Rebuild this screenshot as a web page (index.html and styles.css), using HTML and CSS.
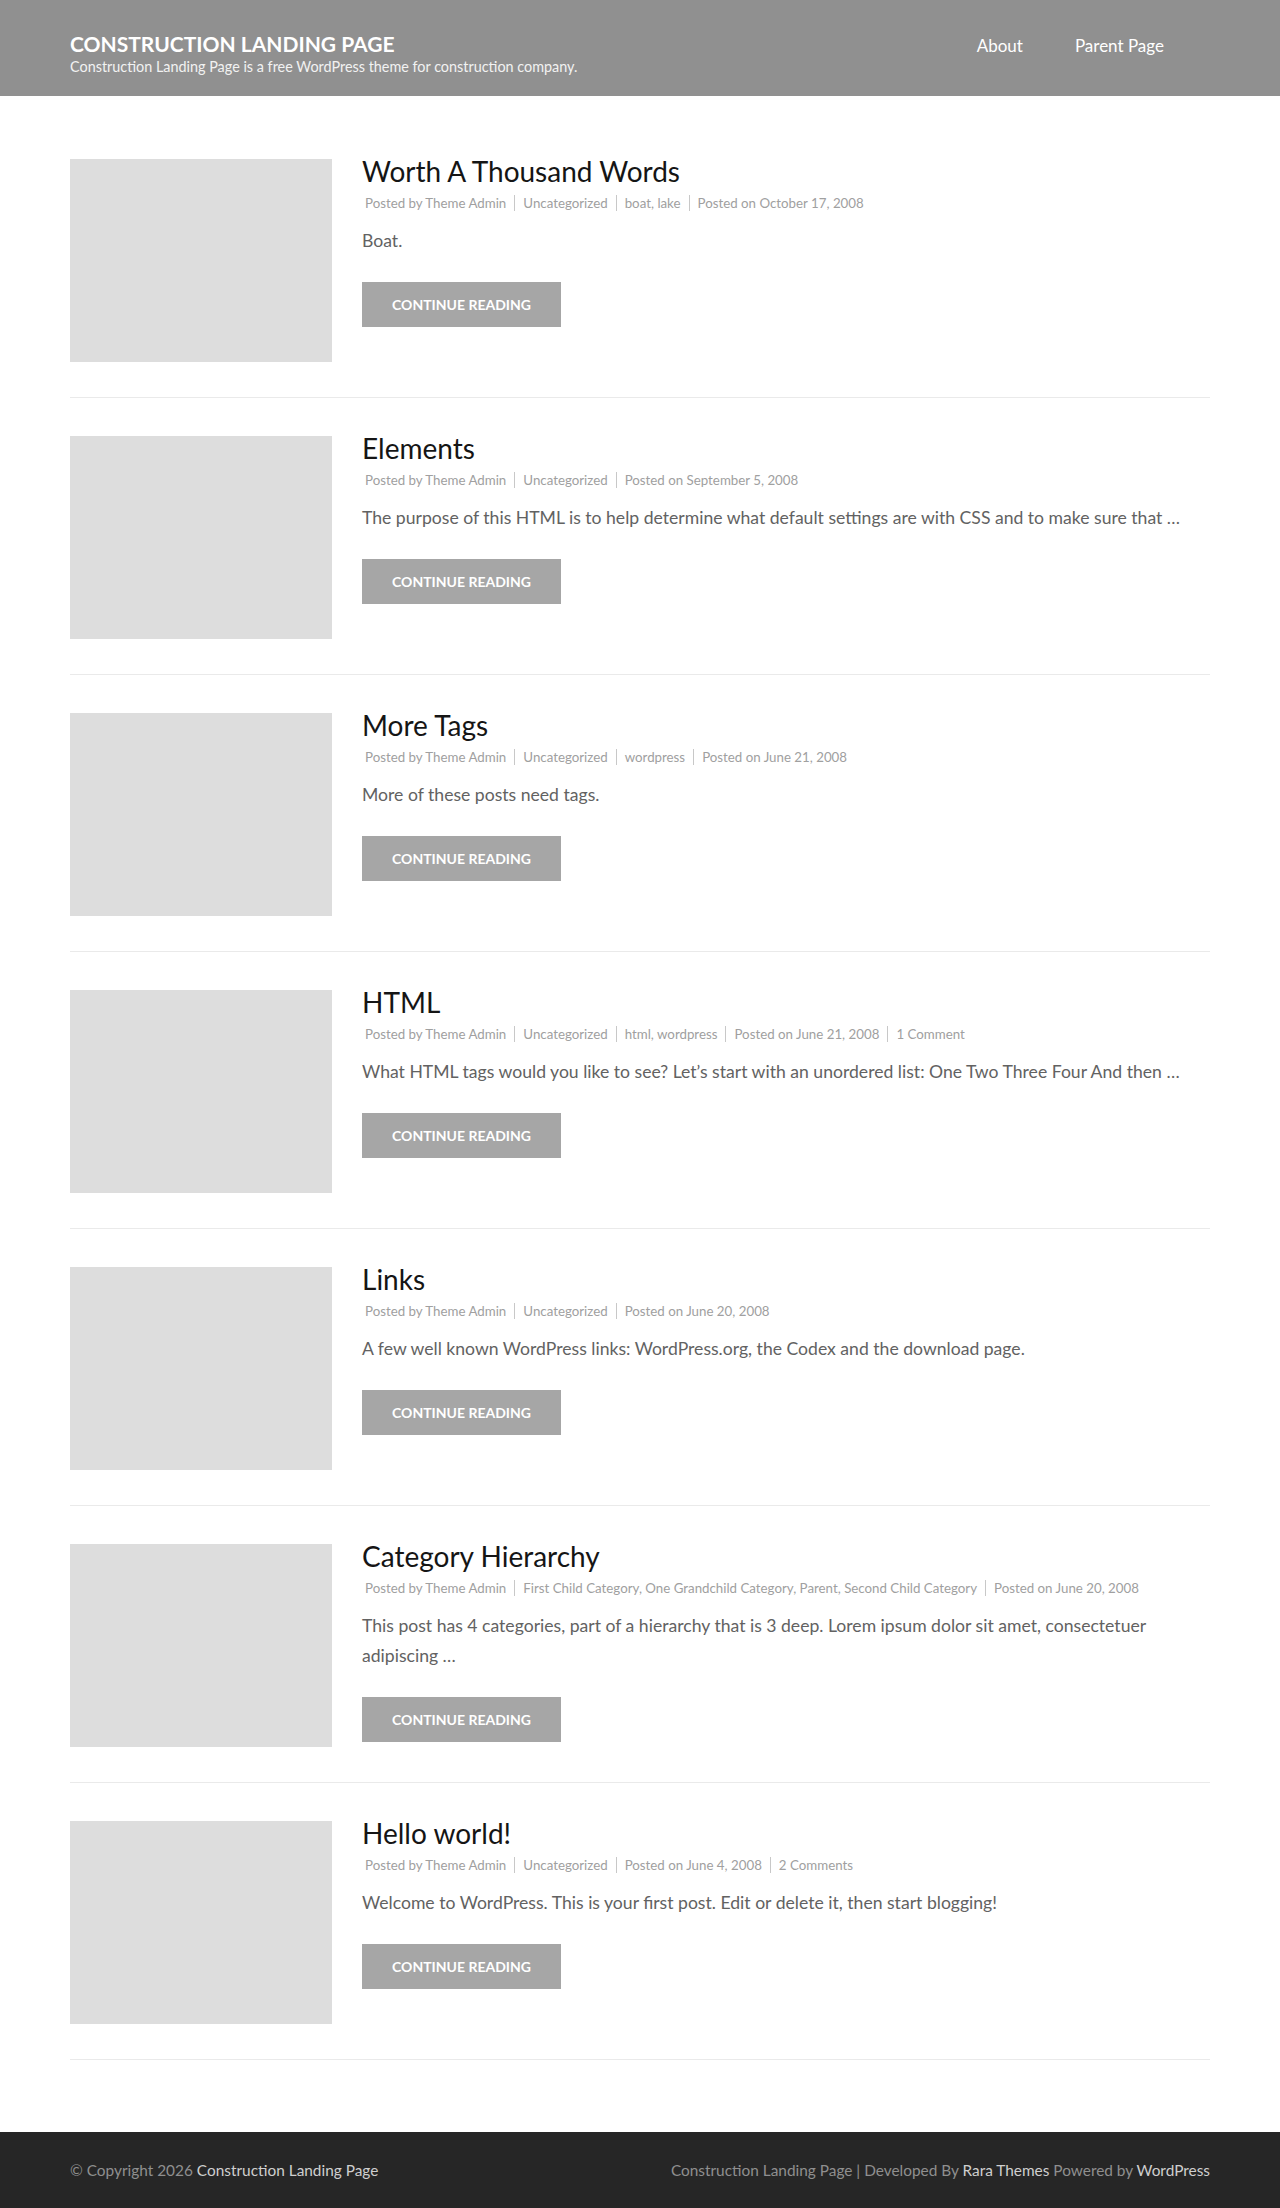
FILE: index.html
```html
<!DOCTYPE html>
<html lang="en">
<head>
<meta charset="utf-8">
<title>Construction Landing Page</title>
<link rel="stylesheet" href="styles.css">
</head>
<body>
<header class="site-header">
  <div class="container header-inner">
    <div class="branding">
      <h1 class="site-title">CONSTRUCTION LANDING PAGE</h1>
      <p class="site-description">Construction Landing Page is a free WordPress theme for construction company.</p>
    </div>
    <nav class="main-nav">
      <a href="#">About</a>
      <a href="#">Parent Page</a>
    </nav>
  </div>
</header>

<main class="site-main">
  <div class="container">
    <article class="post">
      <div class="post-thumb"></div>
      <div class="post-body">
        <h2 class="post-title">Worth A Thousand Words</h2>
        <div class="post-meta"><span class="meta-item">Posted by <a href="#">Theme Admin</a></span><span class="meta-item"><a href="#">Uncategorized</a></span><span class="meta-item"><a href="#">boat</a>, <a href="#">lake</a></span><span class="meta-item">Posted on <a href="#">October 17, 2008</a></span></div>
        <p class="post-excerpt">Boat.</p>
        <a class="btn-more" href="#">CONTINUE READING</a>
      </div>
    </article>

    <article class="post">
      <div class="post-thumb"></div>
      <div class="post-body">
        <h2 class="post-title">Elements</h2>
        <div class="post-meta"><span class="meta-item">Posted by <a href="#">Theme Admin</a></span><span class="meta-item"><a href="#">Uncategorized</a></span><span class="meta-item">Posted on <a href="#">September 5, 2008</a></span></div>
        <p class="post-excerpt">The purpose of this HTML is to help determine what default settings are with CSS and to make sure that …</p>
        <a class="btn-more" href="#">CONTINUE READING</a>
      </div>
    </article>

    <article class="post">
      <div class="post-thumb"></div>
      <div class="post-body">
        <h2 class="post-title">More Tags</h2>
        <div class="post-meta"><span class="meta-item">Posted by <a href="#">Theme Admin</a></span><span class="meta-item"><a href="#">Uncategorized</a></span><span class="meta-item"><a href="#">wordpress</a></span><span class="meta-item">Posted on <a href="#">June 21, 2008</a></span></div>
        <p class="post-excerpt">More of these posts need tags.</p>
        <a class="btn-more" href="#">CONTINUE READING</a>
      </div>
    </article>

    <article class="post">
      <div class="post-thumb"></div>
      <div class="post-body">
        <h2 class="post-title">HTML</h2>
        <div class="post-meta"><span class="meta-item">Posted by <a href="#">Theme Admin</a></span><span class="meta-item"><a href="#">Uncategorized</a></span><span class="meta-item"><a href="#">html</a>, <a href="#">wordpress</a></span><span class="meta-item">Posted on <a href="#">June 21, 2008</a></span><span class="meta-item"><a href="#">1 Comment</a></span></div>
        <p class="post-excerpt">What HTML tags would you like to see? Let’s start with an unordered list: One Two Three Four And then …</p>
        <a class="btn-more" href="#">CONTINUE READING</a>
      </div>
    </article>

    <article class="post">
      <div class="post-thumb"></div>
      <div class="post-body">
        <h2 class="post-title">Links</h2>
        <div class="post-meta"><span class="meta-item">Posted by <a href="#">Theme Admin</a></span><span class="meta-item"><a href="#">Uncategorized</a></span><span class="meta-item">Posted on <a href="#">June 20, 2008</a></span></div>
        <p class="post-excerpt">A few well known WordPress links: WordPress.org, the Codex and the download page.</p>
        <a class="btn-more" href="#">CONTINUE READING</a>
      </div>
    </article>

    <article class="post">
      <div class="post-thumb"></div>
      <div class="post-body">
        <h2 class="post-title">Category Hierarchy</h2>
        <div class="post-meta"><span class="meta-item">Posted by <a href="#">Theme Admin</a></span><span class="meta-item"><a href="#">First Child Category</a>, <a href="#">One Grandchild Category</a>, <a href="#">Parent</a>, <a href="#">Second Child Category</a></span><span class="meta-item">Posted on <a href="#">June 20, 2008</a></span></div>
        <p class="post-excerpt">This post has 4 categories, part of a hierarchy that is 3 deep. Lorem ipsum dolor sit amet, consectetuer adipiscing …</p>
        <a class="btn-more" href="#">CONTINUE READING</a>
      </div>
    </article>

    <article class="post">
      <div class="post-thumb"></div>
      <div class="post-body">
        <h2 class="post-title">Hello world!</h2>
        <div class="post-meta"><span class="meta-item">Posted by <a href="#">Theme Admin</a></span><span class="meta-item"><a href="#">Uncategorized</a></span><span class="meta-item">Posted on <a href="#">June 4, 2008</a></span><span class="meta-item"><a href="#">2 Comments</a></span></div>
        <p class="post-excerpt">Welcome to WordPress. This is your first post. Edit or delete it, then start blogging!</p>
        <a class="btn-more" href="#">CONTINUE READING</a>
      </div>
    </article>
  </div>
</main>

<footer class="site-footer">
  <div class="container footer-inner">
    <div class="copyright">© Copyright 2026 <a href="#">Construction Landing Page</a></div>
    <div class="credits">Construction Landing Page | Developed By <a href="#">Rara Themes</a> Powered by <a href="#">WordPress</a></div>
  </div>
</footer>
</body>
</html>
```

FILE: styles.css
```css
* {
  box-sizing: border-box;
}

html, body {
  margin: 0;
  padding: 0;
}

body {
  font-family: Lato, "Noto Sans", "Liberation Sans", sans-serif;
  color: #666;
  background: #fff;
}

a {
  text-decoration: none;
  color: inherit;
}

.container {
  width: 1140px;
  margin: 0 auto;
}

/* Header */
.site-header {
  background: #909090;
  height: 96px;
}

.header-inner {
  display: flex;
  justify-content: space-between;
  align-items: center;
  height: 96px;
}

.branding {
  align-self: flex-start;
  padding-top: 31px;
}

.site-title {
  margin: 0;
  font-size: 21px;
  line-height: 26px;
  font-weight: 700;
  color: #fff;
}

.site-description {
  margin: 0;
  font-size: 14.4px;
  line-height: 20px;
  color: #f2f2f2;
}

.main-nav {
  display: flex;
  gap: 52px;
  padding-right: 46px;
  padding-bottom: 6px;
}

.main-nav a {
  color: #fff;
  font-size: 17px;
}

/* Main */
.site-main {
  padding-top: 63px;
  padding-bottom: 72px;
}

.post {
  display: flex;
  gap: 30px;
  padding-bottom: 35px;
  border-bottom: 1px solid #eaeaea;
  margin-bottom: 38px;
}

.post:last-child {
  margin-bottom: 0;
}

.post-thumb {
  flex: 0 0 262px;
  height: 203px;
  background: #dddddd;
}

.post-body {
  flex: 1;
  min-width: 0;
}

.post-title {
  margin: -5px 0 0;
  font-size: 28px;
  line-height: 34px;
  font-weight: 400;
  color: #151515;
}

.post-meta {
  margin-top: 6px;
  font-size: 13.3px;
  line-height: 18px;
  color: #a0a0a0;
  padding-left: 3px;
}

.meta-item {
  padding: 0 8px;
  border-left: 1px solid #c8c8c8;
}

.meta-item:first-child {
  padding-left: 0;
  border-left: 0;
}

.post-excerpt {
  margin: 14px 0 0;
  font-size: 17.6px;
  line-height: 30px;
  color: #626262;
}

.btn-more {
  display: inline-block;
  margin-top: 26px;
  width: 199px;
  height: 45px;
  line-height: 45px;
  text-align: center;
  background: #a6a6a6;
  color: #fff;
  font-size: 14px;
  font-weight: 700;
}

/* Footer */
.site-footer {
  background: #262626;
  height: 76px;
}

.footer-inner {
  display: flex;
  justify-content: space-between;
  align-items: center;
  height: 76px;
  font-size: 15.4px;
  color: #8f8f8f;
}

.footer-inner a {
  color: #cfcfcf;
}
```
